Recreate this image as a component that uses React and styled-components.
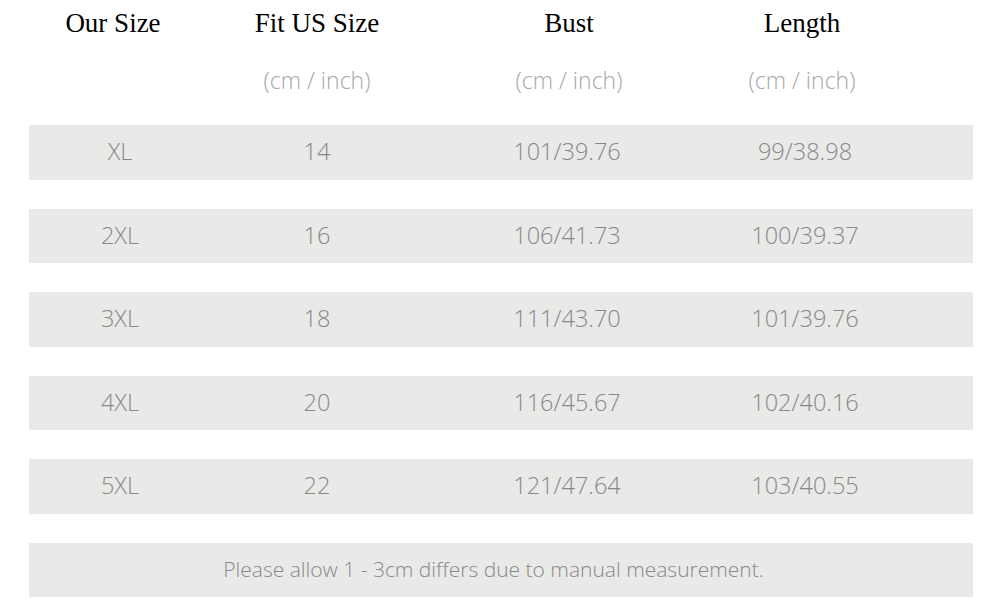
import React from 'react';
import styled, { createGlobalStyle } from 'styled-components';

const GlobalStyle = createGlobalStyle`
  html, body {
    margin: 0;
    padding: 0;
    background: #fff;
  }
`;

const rows = [
  ['XL', '14', '101/39.76', '99/38.98'],
  ['2XL', '16', '106/41.73', '100/39.37'],
  ['3XL', '18', '111/43.70', '101/39.76'],
  ['4XL', '20', '116/45.67', '102/40.16'],
  ['5XL', '22', '121/47.64', '103/40.55'],
];

const Page = styled.div`
  width: 944px;
  padding: 0 27px 0 29px;
  font-family: "Open Sans", "Liberation Sans", sans-serif;
`;

const Header = styled.div`
  display: grid;
  grid-template-columns: 168px 240px 264px 202px 1fr;
  grid-template-rows: 46px 68px;
  margin-bottom: 11px;
`;

const Title = styled.div`
  display: flex;
  align-items: center;
  justify-content: center;
  font-family: "Liberation Serif", "Times New Roman", serif;
  font-size: 27px;
  color: #000;
  white-space: nowrap;
`;

const Unit = styled.div`
  display: flex;
  align-items: center;
  justify-content: center;
  font-size: 23px;
  font-weight: 300;
  color: #a8a8a8;
  white-space: nowrap;
`;

const List = styled.div`
  display: flex;
  flex-direction: column;
  gap: 29px;
`;

const Row = styled.div`
  display: grid;
  grid-template-columns: ${(p) => (p.$note ? '1fr' : '182px 212px 288px 188px 1fr')};
  height: 54.5px;
  background: #e9e9e8;
`;

const Cell = styled.div`
  display: flex;
  align-items: center;
  justify-content: center;
  padding-bottom: 2px;
  font-size: 23.5px;
  font-weight: 300;
  color: #888;
  white-space: nowrap;
`;

const Note = styled(Cell)`
  font-size: 21px;
  padding-right: 15px;
`;

export default function App() {
  return (
    <>
      <GlobalStyle />
      <Page>
        <Header>
          <Title>Our Size</Title>
          <Title>Fit US Size</Title>
          <Title>Bust</Title>
          <Title>Length</Title>
          <span />
          <span />
          <Unit>(cm / inch)</Unit>
          <Unit>(cm / inch)</Unit>
          <Unit>(cm / inch)</Unit>
          <span />
        </Header>
        <List>
          {rows.map((r) => (
            <Row key={r[0]}>
              {r.map((v, i) => (
                <Cell key={i}>{v}</Cell>
              ))}
              <span />
            </Row>
          ))}
          <Row $note>
            <Note>Please allow 1 - 3cm differs due to manual measurement.</Note>
          </Row>
        </List>
      </Page>
    </>
  );
}
